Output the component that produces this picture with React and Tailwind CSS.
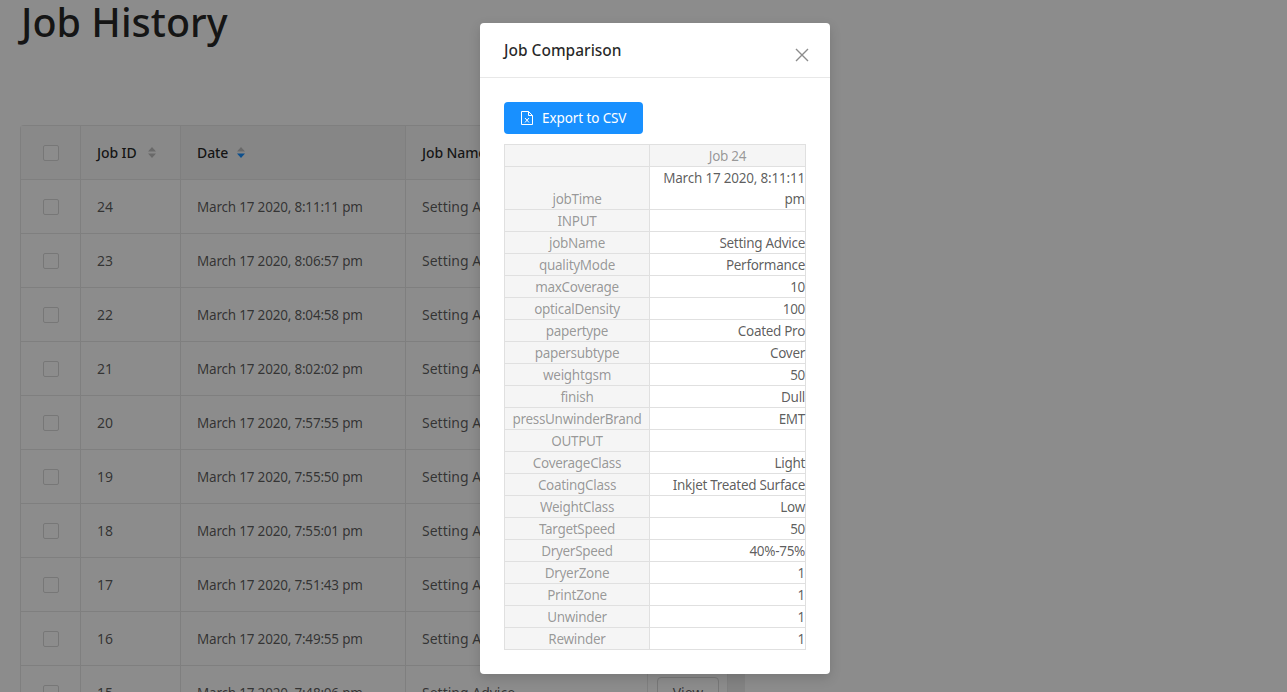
const jobs = [
  ['24', 'March 17 2020, 8:11:11 pm'],
  ['23', 'March 17 2020, 8:06:57 pm'],
  ['22', 'March 17 2020, 8:04:58 pm'],
  ['21', 'March 17 2020, 8:02:02 pm'],
  ['20', 'March 17 2020, 7:57:55 pm'],
  ['19', 'March 17 2020, 7:55:50 pm'],
  ['18', 'March 17 2020, 7:55:01 pm'],
  ['17', 'March 17 2020, 7:51:43 pm'],
  ['16', 'March 17 2020, 7:49:55 pm'],
  ['15', 'March 17 2020, 7:48:06 pm'],
];

const comparison = [
  ['INPUT', ''],
  ['jobName', 'Setting Advice'],
  ['qualityMode', 'Performance'],
  ['maxCoverage', '10'],
  ['opticalDensity', '100'],
  ['papertype', 'Coated Pro'],
  ['papersubtype', 'Cover'],
  ['weightgsm', '50'],
  ['finish', 'Dull'],
  ['pressUnwinderBrand', 'EMT'],
  ['OUTPUT', ''],
  ['CoverageClass', 'Light'],
  ['CoatingClass', 'Inkjet Treated Surface'],
  ['WeightClass', 'Low'],
  ['TargetSpeed', '50'],
  ['DryerSpeed', '40%-75%'],
  ['DryerZone', '1'],
  ['PrintZone', '1'],
  ['Unwinder', '1'],
  ['Rewinder', '1'],
];

function SortIcon({ active }) {
  return (
    <svg width="10" height="13" viewBox="0 0 10 13" className={active ? 'ml-2 shrink-0' : 'ml-[10px] shrink-0'}>
      <path d="M5 1 L9 5.5 H1 Z" fill="#bfbfbf" />
      <path d="M5 12 L9 7.5 H1 Z" fill={active ? '#1890ff' : '#bfbfbf'} />
    </svg>
  );
}

function Checkbox() {
  return <span className="block w-4 h-4 bg-white border border-[#d9d9d9] rounded-[2px]" />;
}

function CsvIcon() {
  return (
    <svg width="12" height="14" viewBox="0 0 12 14" fill="none" stroke="white" strokeWidth="1" className="shrink-0">
      <path d="M0.5 0.5 H7.5 L11.5 4.5 V13.5 H0.5 Z" />
      <path d="M7.5 0.5 V4.5 H11.5" />
      <path d="M4 7 L8 11.5 M8 7 L4 11.5" />
    </svg>
  );
}

export default function App() {
  return (
    <div className="h-[692px] overflow-hidden bg-white relative font-['Noto_Sans',sans-serif] text-[14px] text-[rgba(0,0,0,0.65)]">
      <div className="pl-5 w-[745px]">
        <h1 className="h-[125px] pl-px text-[39.5px] leading-[44px] font-medium text-[rgba(0,0,0,0.85)]">Job History</h1>
        <div className="border-l border-t border-[#e8e8e8] rounded-t-[4px] w-[725px]">
          <div className="flex h-[54px] bg-[#fafafa] border-b border-[#e8e8e8] text-[rgba(0,0,0,0.85)] font-medium tracking-[-0.1px]">
            <div className="w-[60px] flex items-center justify-center border-r border-[#e8e8e8]"><Checkbox /></div>
            <div className="w-[100px] pl-4 flex items-center border-r border-[#e8e8e8]">Job ID<SortIcon /></div>
            <div className="w-[225px] pl-4 flex items-center border-r border-[#e8e8e8] bg-[#f5f5f5]">Date<SortIcon active /></div>
            <div className="flex-1 pl-4 flex items-center">Job Name</div>
          </div>
          {jobs.map(([id, date]) => (
            <div key={id} className="flex h-[54px] border-b border-[#e8e8e8]">
              <div className="w-[60px] flex items-center justify-center border-r border-[#e8e8e8]"><Checkbox /></div>
              <div className="w-[100px] pl-4 flex items-center border-r border-[#e8e8e8]">{id}</div>
              <div className="w-[225px] pl-4 pt-[2px] flex items-center border-r border-[#e8e8e8] text-[13.5px] tracking-[-0.2px]">{date}</div>
              <div className="w-[242px] pl-4 flex items-center border-r border-[#e8e8e8]">Setting Advice</div>
              <div className="w-[80px] pl-[9px] flex items-center border-r border-[#e8e8e8]">
                <span className="h-8 w-[62px] border border-[#d9d9d9] rounded-[4px] flex items-center justify-center">View</span>
              </div>
              <div className="flex-1 bg-[#eeeeee]" />
            </div>
          ))}
        </div>
      </div>

      {/* modal overlay */}
      <div className="absolute inset-0 bg-[rgba(0,0,0,0.45)]" />
      <div className="absolute left-[480px] top-[23px] w-[350px] h-[651px] bg-white rounded-[4px] shadow-[0_4px_12px_rgba(0,0,0,0.15)]">
        <div className="h-[55px] border-b border-[#e8e8e8] pl-6 pt-4 flex justify-between">
          <span className="text-[15.5px] leading-[22px] font-medium text-[rgba(0,0,0,0.85)]">Job Comparison</span>
          <svg width="14" height="14" viewBox="0 0 14 14" stroke="#8c8c8c" strokeWidth="1.4" className="mr-[21px] mt-[9px]">
            <path d="M1 1 L13 13 M13 1 L1 13" />
          </svg>
        </div>
        <div className="p-6">
          <button className="h-8 w-[139px] bg-[#1890ff] rounded-[4px] text-white flex items-center pl-[17px] gap-[9px] text-[13.5px] tracking-[-0.1px]">
            <CsvIcon />
            Export to CSV
          </button>
          <table className="w-[302px] mt-[10px] border-collapse table-fixed text-[13.5px] leading-[20px] tracking-[-0.3px] [&_td]:pt-px">
            <tbody>
              <tr>
                <td className="w-[145px] bg-[#f5f5f5] border border-[#e0e0e0]"></td>
                <td className="bg-[#f5f5f5] border border-[#e0e0e0] text-center text-[rgba(0,0,0,0.4)]">Job 24</td>
              </tr>
              <tr>
                <td className="bg-[#f5f5f5] border border-[#e0e0e0] text-center align-bottom text-[rgba(0,0,0,0.4)]">jobTime</td>
                <td className="border border-[#e0e0e0] text-right tracking-[-0.2px] leading-[20.5px]">March 17 2020, 8:11:11 pm</td>
              </tr>
              {comparison.map(([k, v]) => (
                <tr key={k}>
                  <td className="bg-[#f5f5f5] border border-[#e0e0e0] text-center text-[rgba(0,0,0,0.4)]">{k}</td>
                  <td className="border border-[#e0e0e0] text-right h-[22px]">{v}</td>
                </tr>
              ))}
            </tbody>
          </table>
        </div>
      </div>
    </div>
  );
}
